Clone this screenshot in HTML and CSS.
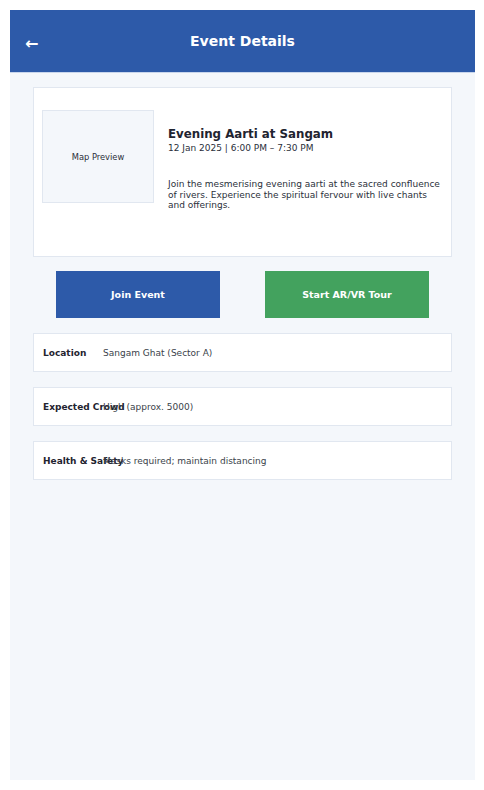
FILE: index.html
```html
<!DOCTYPE html>
<html lang="en">
<head>
<meta charset="utf-8">
<title>Event Details</title>
<link rel="stylesheet" href="styles.css">
</head>
<body>
<div class="app">
  <header class="topbar">
    <span class="back">←</span>
    <h1 class="title">Event Details</h1>
  </header>
  <main class="content">
    <section class="card">
      <div class="map">Map Preview</div>
      <div class="info">
        <h2 class="event-name">Evening Aarti at Sangam</h2>
        <div class="event-date">12 Jan 2025 | 6:00 PM – 7:30 PM</div>
        <p class="event-desc">Join the mesmerising evening aarti at the sacred confluence of rivers. Experience the spiritual fervour with live chants and offerings.</p>
      </div>
    </section>
    <div class="actions">
      <button class="btn btn-join">Join Event</button>
      <button class="btn btn-tour">Start AR/VR Tour</button>
    </div>
    <div class="row"><span class="label">Location</span><span class="value">Sangam Ghat (Sector A)</span></div>
    <div class="row"><span class="label">Expected Crowd</span><span class="value">High (approx. 5000)</span></div>
    <div class="row"><span class="label">Health &amp; Safety</span><span class="value">Masks required; maintain distancing</span></div>
  </main>
</div>
</body>
</html>
```
FILE: styles.css
```css
* { box-sizing: border-box; }
html, body { margin: 0; padding: 0; background: #ffffff; }
body {
  padding: 10px;
  font-family: "DejaVu Sans", "Noto Sans", sans-serif;
  color: #1f2430;
}
.app {
  width: 465px;
  height: 770px;
  background: #f4f7fb;
  display: flex;
  flex-direction: column;
}
.topbar {
  height: 63px;
  background: #2d5aa9;
  border-bottom: 1px solid #c9d6ec;
  display: flex;
  align-items: center;
  justify-content: center;
  position: relative;
  color: #ffffff;
}
.back {
  position: absolute;
  left: 15px;
  top: 26px;
  font-size: 16px;
  font-weight: bold;
  line-height: 1;
}
.title {
  margin: 0;
  font-size: 14px;
  font-weight: bold;
  line-height: 1;
  margin-top: -1px;
}
.content {
  padding: 14px 23px 0;
  display: flex;
  flex-direction: column;
}
.card {
  height: 170px;
  background: #ffffff;
  border: 1px solid #e1e7f0;
  padding: 22px 8px;
  display: flex;
  align-items: flex-start;
  gap: 14px;
}
.map {
  flex: 0 0 112px;
  height: 93px;
  background: #f4f7fb;
  border: 1px solid #e1e7f0;
  display: flex;
  align-items: center;
  justify-content: center;
  font-size: 8.3px;
  color: #2a2f3a;
}
.info { flex: 1; padding-top: 16px; }
.event-name {
  margin: 0;
  font-size: 11.8px;
  font-weight: bold;
  line-height: 16px;
  color: #1f2430;
}
.event-date {
  font-size: 9px;
  line-height: 12px;
  margin-top: 0;
  color: #2a2f3a;
}
.event-desc {
  margin: 25px 0 0;
  font-size: 9px;
  line-height: 10.6px;
  color: #2a2f3a;
}
.actions {
  display: flex;
  justify-content: space-between;
  padding: 14px 23px 15px;
}
.btn {
  width: 164px;
  height: 47px;
  border: none;
  color: #ffffff;
  font-family: "DejaVu Sans", "Noto Sans", sans-serif;
  font-weight: bold;
  font-size: 9.5px;
  padding: 0;
}
.btn-join { background: #2d5aa9; }
.btn-tour { background: #43a25e; }
.row {
  height: 39px;
  background: #ffffff;
  border: 1px solid #e1e7f0;
  display: flex;
  align-items: center;
  padding: 0 9px;
  font-size: 9px;
  margin-bottom: 15px;
  white-space: nowrap;
}
.label {
  width: 60px;
  flex: 0 0 60px;
  font-weight: bold;
  color: #1f2430;
}
.value { color: #3a3f4a; }
```
